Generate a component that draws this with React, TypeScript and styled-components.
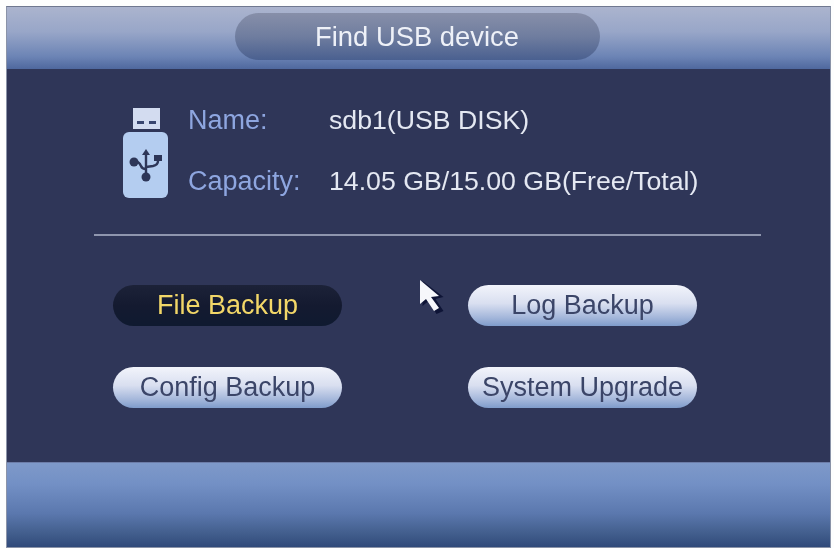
import React from 'react';
import styled, { createGlobalStyle } from 'styled-components';

const GlobalStyle = createGlobalStyle`
    html, body {
        margin: 0;
        padding: 0;
        background: #fdfefe;
    }
    * {
        box-sizing: border-box;
    }
`;

export default function App() {
    return (
        <>
            <GlobalStyle />
            <Page>
                <Dialog>
                    <Header>
                        <TitlePill>Find USB device</TitlePill>
                    </Header>
                    <Body>
                        <InfoRow>
                            <UsbIcon />
                            <InfoGrid>
                                <Label>Name:</Label>
                                <Value>sdb1(USB DISK)</Value>
                                <Label>Capacity:</Label>
                                <Value>14.05 GB/15.00 GB(Free/Total)</Value>
                            </InfoGrid>
                        </InfoRow>
                        <Divider />
                        <ButtonGrid>
                            <PillButton $active>File Backup</PillButton>
                            <PillButton>Log Backup</PillButton>
                            <PillButton>Config Backup</PillButton>
                            <PillButton>System Upgrade</PillButton>
                        </ButtonGrid>
                        <Cursor />
                    </Body>
                    <Footer />
                </Dialog>
            </Page>
        </>
    );
}

function UsbIcon() {
    return (
        <svg width="46" height="92" viewBox="0 0 46 92" style={{ flex: 'none' }}>
            <rect x="10" y="1" width="27" height="21" fill="#d3dcf0" />
            <rect x="14" y="14" width="7" height="3" fill="#39466f" />
            <rect x="26" y="14" width="7" height="3" fill="#39466f" />
            <rect x="0" y="25" width="45" height="66" rx="6" fill="#b4cdf0" />
            <g stroke="#2d3658" strokeWidth="2.4" fill="none">
                <path d="M23 46V70" />
                <path d="M11 55H14Q16 55 18 59Q19 62 23 62" />
                <path d="M35 52V54Q35 58 30 59L23 60" />
            </g>
            <path d="M23 42L19 48H27Z" fill="#2d3658" />
            <circle cx="11" cy="55" r="4.5" fill="#2d3658" />
            <rect x="31" y="48" width="8" height="6" fill="#2d3658" />
            <circle cx="23" cy="70" r="4.5" fill="#2d3658" />
        </svg>
    );
}

function Cursor() {
    return (
        <CursorMark width="34" height="42" viewBox="0 0 34 42">
            <path d="M3 2V27L9 22L17 35L24 32L16 20L24 18Z" fill="#0e1436" transform="translate(2.5 1)" />
            <path d="M3 2V26L9 21L17 33L22 30L14 19L22 18Z" fill="#f6f7fb" />
        </CursorMark>
    );
}

const Page = styled.div`
    width: 834px;
    height: 548px;
    padding: 6px 3px 0 6px;
    overflow: hidden;
`;

const Dialog = styled.div`
    height: 100%;
    display: flex;
    flex-direction: column;
    border: 1px solid #8a93a8;
    border-top-color: #6f7890;
    font-family: 'Liberation Sans', Arial, sans-serif;
    filter: blur(0.7px);
`;

const Header = styled.div`
    height: 62px;
    flex: none;
    display: flex;
    justify-content: center;
    padding: 6px 0 8px;
    background: linear-gradient(180deg, #abb4ce 0%, #98a6c8 40%, #6c84b5 80%, #4f689e 100%);
`;

const TitlePill = styled.div`
    width: 365px;
    height: 47px;
    margin-left: -3px;
    display: flex;
    align-items: center;
    justify-content: center;
    border-radius: 24px;
    font-size: 27.4px;
    color: #eef1f8;
    background: linear-gradient(180deg, #878fa9 0%, #6f7d9f 50%, #4a6090 100%);
`;

const Body = styled.div`
    position: relative;
    flex: 1;
    min-height: 0;
    padding: 38px 69px 0 87px;
    background: #2f3658;
`;

const InfoRow = styled.div`
    display: flex;
    align-items: flex-start;
    margin-left: 29px;
    gap: 19px;
`;

const InfoGrid = styled.div`
    display: grid;
    grid-template-columns: 141px auto;
    grid-auto-rows: 61px;
    margin-top: -17px;
    align-items: center;
`;

const Label = styled.div`
    font-size: 27px;
    color: #8ea6e0;
`;

const Value = styled.div`
    font-size: 26.7px;
    color: #e4e8f2;
`;

const Divider = styled.div`
    height: 2px;
    margin-top: 22px;
    background: #8f96ae;
`;

const ButtonGrid = styled.div`
    display: grid;
    grid-template-columns: 229px 229px;
    grid-auto-rows: 41px;
    justify-content: space-between;
    row-gap: 41px;
    margin: 49px 0 0 19px;
    padding-right: 64px;
`;

const PillButton = styled.div<{ $active?: boolean }>`
    display: flex;
    align-items: center;
    justify-content: center;
    border-radius: 21px;
    font-size: 27px;
    white-space: nowrap;
    color: ${(p) => (p.$active ? '#f2d768' : '#3b4568')};
    background: ${(p) =>
        p.$active
            ? 'linear-gradient(180deg, #1c2238 0%, #141a30 50%, #0f1a30 100%)'
            : 'linear-gradient(180deg, #f2f4fb 0%, #d9dff0 45%, #a3b6da 80%, #7f9ccb 100%)'};
`;

const CursorMark = styled.svg`
    position: absolute;
    left: 410px;
    top: 209px;
`;

const Footer = styled.div`
    height: 85px;
    flex: none;
    border-top: 1px solid #6d7da8;
    background: linear-gradient(180deg, #7e99c9 0%, #7390c5 25%, #5b78ae 60%, #44608f 82%, #304a7a 100%);
`;
